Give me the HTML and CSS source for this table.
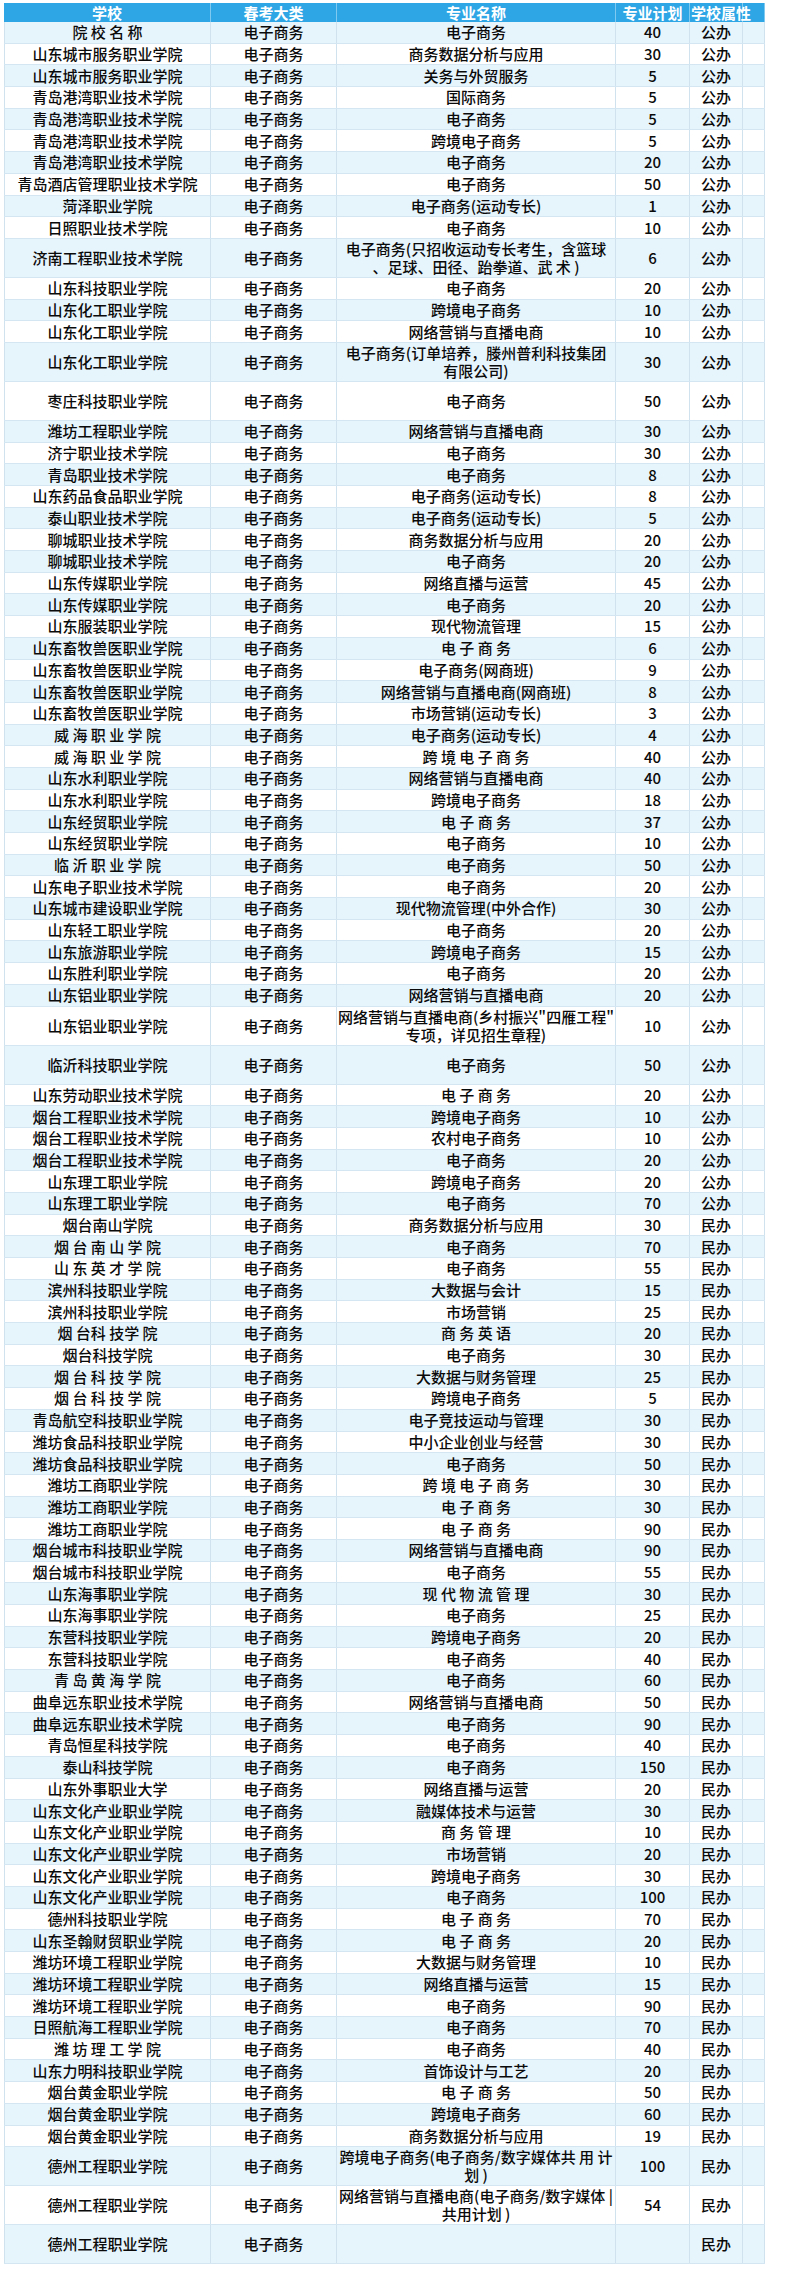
FILE: index.html
```html
<!DOCTYPE html>
<html lang="zh-CN">
<head>
<meta charset="utf-8">
<title>电子商务类 专业计划</title>
<link rel="stylesheet" href="styles.css">
</head>
<body>
<div class="sheet">
  <div class="row head"><div>学校</div><div>春考大类</div><div>专业名称</div><div>专业计划</div><div class="attr">学校属性</div><div></div></div>
  <div class="row"><div>院 校 名 称</div><div>电子商务</div><div>电子商务</div><div>40</div><div>公办</div><div></div></div>
  <div class="row"><div>山东城市服务职业学院</div><div>电子商务</div><div>商务数据分析与应用</div><div>30</div><div>公办</div><div></div></div>
  <div class="row"><div>山东城市服务职业学院</div><div>电子商务</div><div>关务与外贸服务</div><div>5</div><div>公办</div><div></div></div>
  <div class="row"><div>青岛港湾职业技术学院</div><div>电子商务</div><div>国际商务</div><div>5</div><div>公办</div><div></div></div>
  <div class="row"><div>青岛港湾职业技术学院</div><div>电子商务</div><div>电子商务</div><div>5</div><div>公办</div><div></div></div>
  <div class="row"><div>青岛港湾职业技术学院</div><div>电子商务</div><div>跨境电子商务</div><div>5</div><div>公办</div><div></div></div>
  <div class="row"><div>青岛港湾职业技术学院</div><div>电子商务</div><div>电子商务</div><div>20</div><div>公办</div><div></div></div>
  <div class="row"><div>青岛酒店管理职业技术学院</div><div>电子商务</div><div>电子商务</div><div>50</div><div>公办</div><div></div></div>
  <div class="row"><div>菏泽职业学院</div><div>电子商务</div><div>电子商务(运动专长)</div><div>1</div><div>公办</div><div></div></div>
  <div class="row"><div>日照职业技术学院</div><div>电子商务</div><div>电子商务</div><div>10</div><div>公办</div><div></div></div>
  <div class="row tall"><div>济南工程职业技术学院</div><div>电子商务</div><div>电子商务(只招收运动专长考生，含篮球<br>、足球、田径、跆拳道、武 术 )</div><div>6</div><div>公办</div><div></div></div>
  <div class="row"><div>山东科技职业学院</div><div>电子商务</div><div>电子商务</div><div>20</div><div>公办</div><div></div></div>
  <div class="row"><div>山东化工职业学院</div><div>电子商务</div><div>跨境电子商务</div><div>10</div><div>公办</div><div></div></div>
  <div class="row"><div>山东化工职业学院</div><div>电子商务</div><div>网络营销与直播电商</div><div>10</div><div>公办</div><div></div></div>
  <div class="row tall"><div>山东化工职业学院</div><div>电子商务</div><div>电子商务(订单培养，滕州普利科技集团<br>有限公司)</div><div>30</div><div>公办</div><div></div></div>
  <div class="row tall"><div>枣庄科技职业学院</div><div>电子商务</div><div>电子商务</div><div>50</div><div>公办</div><div></div></div>
  <div class="row"><div>潍坊工程职业学院</div><div>电子商务</div><div>网络营销与直播电商</div><div>30</div><div>公办</div><div></div></div>
  <div class="row"><div>济宁职业技术学院</div><div>电子商务</div><div>电子商务</div><div>30</div><div>公办</div><div></div></div>
  <div class="row"><div>青岛职业技术学院</div><div>电子商务</div><div>电子商务</div><div>8</div><div>公办</div><div></div></div>
  <div class="row"><div>山东药品食品职业学院</div><div>电子商务</div><div>电子商务(运动专长)</div><div>8</div><div>公办</div><div></div></div>
  <div class="row"><div>泰山职业技术学院</div><div>电子商务</div><div>电子商务(运动专长)</div><div>5</div><div>公办</div><div></div></div>
  <div class="row"><div>聊城职业技术学院</div><div>电子商务</div><div>商务数据分析与应用</div><div>20</div><div>公办</div><div></div></div>
  <div class="row"><div>聊城职业技术学院</div><div>电子商务</div><div>电子商务</div><div>20</div><div>公办</div><div></div></div>
  <div class="row"><div>山东传媒职业学院</div><div>电子商务</div><div>网络直播与运营</div><div>45</div><div>公办</div><div></div></div>
  <div class="row"><div>山东传媒职业学院</div><div>电子商务</div><div>电子商务</div><div>20</div><div>公办</div><div></div></div>
  <div class="row"><div>山东服装职业学院</div><div>电子商务</div><div>现代物流管理</div><div>15</div><div>公办</div><div></div></div>
  <div class="row"><div>山东畜牧兽医职业学院</div><div>电子商务</div><div>电 子 商 务</div><div>6</div><div>公办</div><div></div></div>
  <div class="row"><div>山东畜牧兽医职业学院</div><div>电子商务</div><div>电子商务(网商班)</div><div>9</div><div>公办</div><div></div></div>
  <div class="row"><div>山东畜牧兽医职业学院</div><div>电子商务</div><div>网络营销与直播电商(网商班)</div><div>8</div><div>公办</div><div></div></div>
  <div class="row"><div>山东畜牧兽医职业学院</div><div>电子商务</div><div>市场营销(运动专长)</div><div>3</div><div>公办</div><div></div></div>
  <div class="row"><div>威 海 职 业 学 院</div><div>电子商务</div><div>电子商务(运动专长)</div><div>4</div><div>公办</div><div></div></div>
  <div class="row"><div>威 海 职 业 学 院</div><div>电子商务</div><div>跨 境 电 子 商 务</div><div>40</div><div>公办</div><div></div></div>
  <div class="row"><div>山东水利职业学院</div><div>电子商务</div><div>网络营销与直播电商</div><div>40</div><div>公办</div><div></div></div>
  <div class="row"><div>山东水利职业学院</div><div>电子商务</div><div>跨境电子商务</div><div>18</div><div>公办</div><div></div></div>
  <div class="row"><div>山东经贸职业学院</div><div>电子商务</div><div>电 子 商 务</div><div>37</div><div>公办</div><div></div></div>
  <div class="row"><div>山东经贸职业学院</div><div>电子商务</div><div>电子商务</div><div>10</div><div>公办</div><div></div></div>
  <div class="row"><div>临 沂 职 业 学 院</div><div>电子商务</div><div>电子商务</div><div>50</div><div>公办</div><div></div></div>
  <div class="row"><div>山东电子职业技术学院</div><div>电子商务</div><div>电子商务</div><div>20</div><div>公办</div><div></div></div>
  <div class="row"><div>山东城市建设职业学院</div><div>电子商务</div><div>现代物流管理(中外合作)</div><div>30</div><div>公办</div><div></div></div>
  <div class="row"><div>山东轻工职业学院</div><div>电子商务</div><div>电子商务</div><div>20</div><div>公办</div><div></div></div>
  <div class="row"><div>山东旅游职业学院</div><div>电子商务</div><div>跨境电子商务</div><div>15</div><div>公办</div><div></div></div>
  <div class="row"><div>山东胜利职业学院</div><div>电子商务</div><div>电子商务</div><div>20</div><div>公办</div><div></div></div>
  <div class="row"><div>山东铝业职业学院</div><div>电子商务</div><div>网络营销与直播电商</div><div>20</div><div>公办</div><div></div></div>
  <div class="row tall"><div>山东铝业职业学院</div><div>电子商务</div><div>网络营销与直播电商(乡村振兴"四雁工程"<br>专项，详见招生章程)</div><div>10</div><div>公办</div><div></div></div>
  <div class="row tall"><div>临沂科技职业学院</div><div>电子商务</div><div>电子商务</div><div>50</div><div>公办</div><div></div></div>
  <div class="row"><div>山东劳动职业技术学院</div><div>电子商务</div><div>电 子 商 务</div><div>20</div><div>公办</div><div></div></div>
  <div class="row"><div>烟台工程职业技术学院</div><div>电子商务</div><div>跨境电子商务</div><div>10</div><div>公办</div><div></div></div>
  <div class="row"><div>烟台工程职业技术学院</div><div>电子商务</div><div>农村电子商务</div><div>10</div><div>公办</div><div></div></div>
  <div class="row"><div>烟台工程职业技术学院</div><div>电子商务</div><div>电子商务</div><div>20</div><div>公办</div><div></div></div>
  <div class="row"><div>山东理工职业学院</div><div>电子商务</div><div>跨境电子商务</div><div>20</div><div>公办</div><div></div></div>
  <div class="row"><div>山东理工职业学院</div><div>电子商务</div><div>电子商务</div><div>70</div><div>公办</div><div></div></div>
  <div class="row"><div>烟台南山学院</div><div>电子商务</div><div>商务数据分析与应用</div><div>30</div><div>民办</div><div></div></div>
  <div class="row"><div>烟 台 南 山 学 院</div><div>电子商务</div><div>电子商务</div><div>70</div><div>民办</div><div></div></div>
  <div class="row"><div>山 东 英 才 学 院</div><div>电子商务</div><div>电子商务</div><div>55</div><div>民办</div><div></div></div>
  <div class="row"><div>滨州科技职业学院</div><div>电子商务</div><div>大数据与会计</div><div>15</div><div>民办</div><div></div></div>
  <div class="row"><div>滨州科技职业学院</div><div>电子商务</div><div>市场营销</div><div>25</div><div>民办</div><div></div></div>
  <div class="row"><div>烟 台科 技学 院</div><div>电子商务</div><div>商 务 英 语</div><div>20</div><div>民办</div><div></div></div>
  <div class="row"><div>烟台科技学院</div><div>电子商务</div><div>电子商务</div><div>30</div><div>民办</div><div></div></div>
  <div class="row"><div>烟 台 科 技 学 院</div><div>电子商务</div><div>大数据与财务管理</div><div>25</div><div>民办</div><div></div></div>
  <div class="row"><div>烟 台 科 技 学 院</div><div>电子商务</div><div>跨境电子商务</div><div>5</div><div>民办</div><div></div></div>
  <div class="row"><div>青岛航空科技职业学院</div><div>电子商务</div><div>电子竞技运动与管理</div><div>30</div><div>民办</div><div></div></div>
  <div class="row"><div>潍坊食品科技职业学院</div><div>电子商务</div><div>中小企业创业与经营</div><div>30</div><div>民办</div><div></div></div>
  <div class="row"><div>潍坊食品科技职业学院</div><div>电子商务</div><div>电子商务</div><div>50</div><div>民办</div><div></div></div>
  <div class="row"><div>潍坊工商职业学院</div><div>电子商务</div><div>跨 境 电 子 商 务</div><div>30</div><div>民办</div><div></div></div>
  <div class="row"><div>潍坊工商职业学院</div><div>电子商务</div><div>电 子 商 务</div><div>30</div><div>民办</div><div></div></div>
  <div class="row"><div>潍坊工商职业学院</div><div>电子商务</div><div>电 子 商 务</div><div>90</div><div>民办</div><div></div></div>
  <div class="row"><div>烟台城市科技职业学院</div><div>电子商务</div><div>网络营销与直播电商</div><div>90</div><div>民办</div><div></div></div>
  <div class="row"><div>烟台城市科技职业学院</div><div>电子商务</div><div>电子商务</div><div>55</div><div>民办</div><div></div></div>
  <div class="row"><div>山东海事职业学院</div><div>电子商务</div><div>现 代 物 流 管 理</div><div>30</div><div>民办</div><div></div></div>
  <div class="row"><div>山东海事职业学院</div><div>电子商务</div><div>电子商务</div><div>25</div><div>民办</div><div></div></div>
  <div class="row"><div>东营科技职业学院</div><div>电子商务</div><div>跨境电子商务</div><div>20</div><div>民办</div><div></div></div>
  <div class="row"><div>东营科技职业学院</div><div>电子商务</div><div>电子商务</div><div>40</div><div>民办</div><div></div></div>
  <div class="row"><div>青 岛 黄 海 学 院</div><div>电子商务</div><div>电子商务</div><div>60</div><div>民办</div><div></div></div>
  <div class="row"><div>曲阜远东职业技术学院</div><div>电子商务</div><div>网络营销与直播电商</div><div>50</div><div>民办</div><div></div></div>
  <div class="row"><div>曲阜远东职业技术学院</div><div>电子商务</div><div>电子商务</div><div>90</div><div>民办</div><div></div></div>
  <div class="row"><div>青岛恒星科技学院</div><div>电子商务</div><div>电子商务</div><div>40</div><div>民办</div><div></div></div>
  <div class="row"><div>泰山科技学院</div><div>电子商务</div><div>电子商务</div><div>150</div><div>民办</div><div></div></div>
  <div class="row"><div>山东外事职业大学</div><div>电子商务</div><div>网络直播与运营</div><div>20</div><div>民办</div><div></div></div>
  <div class="row"><div>山东文化产业职业学院</div><div>电子商务</div><div>融媒体技术与运营</div><div>30</div><div>民办</div><div></div></div>
  <div class="row"><div>山东文化产业职业学院</div><div>电子商务</div><div>商 务 管 理</div><div>10</div><div>民办</div><div></div></div>
  <div class="row"><div>山东文化产业职业学院</div><div>电子商务</div><div>市场营销</div><div>20</div><div>民办</div><div></div></div>
  <div class="row"><div>山东文化产业职业学院</div><div>电子商务</div><div>跨境电子商务</div><div>30</div><div>民办</div><div></div></div>
  <div class="row"><div>山东文化产业职业学院</div><div>电子商务</div><div>电子商务</div><div>100</div><div>民办</div><div></div></div>
  <div class="row"><div>德州科技职业学院</div><div>电子商务</div><div>电 子 商 务</div><div>70</div><div>民办</div><div></div></div>
  <div class="row"><div>山东圣翰财贸职业学院</div><div>电子商务</div><div>电 子 商 务</div><div>20</div><div>民办</div><div></div></div>
  <div class="row"><div>潍坊环境工程职业学院</div><div>电子商务</div><div>大数据与财务管理</div><div>10</div><div>民办</div><div></div></div>
  <div class="row"><div>潍坊环境工程职业学院</div><div>电子商务</div><div>网络直播与运营</div><div>15</div><div>民办</div><div></div></div>
  <div class="row"><div>潍坊环境工程职业学院</div><div>电子商务</div><div>电子商务</div><div>90</div><div>民办</div><div></div></div>
  <div class="row"><div>日照航海工程职业学院</div><div>电子商务</div><div>电子商务</div><div>70</div><div>民办</div><div></div></div>
  <div class="row"><div>潍 坊 理 工 学 院</div><div>电子商务</div><div>电子商务</div><div>40</div><div>民办</div><div></div></div>
  <div class="row"><div>山东力明科技职业学院</div><div>电子商务</div><div>首饰设计与工艺</div><div>20</div><div>民办</div><div></div></div>
  <div class="row"><div>烟台黄金职业学院</div><div>电子商务</div><div>电 子 商 务</div><div>50</div><div>民办</div><div></div></div>
  <div class="row"><div>烟台黄金职业学院</div><div>电子商务</div><div>跨境电子商务</div><div>60</div><div>民办</div><div></div></div>
  <div class="row"><div>烟台黄金职业学院</div><div>电子商务</div><div>商务数据分析与应用</div><div>19</div><div>民办</div><div></div></div>
  <div class="row tall"><div>德州工程职业学院</div><div>电子商务</div><div>跨境电子商务(电子商务/数字媒体共 用 计<br>划 )</div><div>100</div><div>民办</div><div></div></div>
  <div class="row tall"><div>德州工程职业学院</div><div>电子商务</div><div>网络营销与直播电商(电子商务/数字媒体 |<br>共用计划 )</div><div>54</div><div>民办</div><div></div></div>
  <div class="row tall"><div>德州工程职业学院</div><div>电子商务</div><div></div><div></div><div>民办</div><div></div></div>
</div>
</body>
</html>
```
FILE: styles.css
```css
html, body {
  margin: 0;
  padding: 0;
  background: #ffffff;
}

body {
  font-family: "Noto Sans CJK SC", "Noto Sans", sans-serif;
  color: #0a0a0a;
}

.sheet {
  padding: 3px 0 0 4px;
  width: 761px;
}

.row {
  display: grid;
  grid-template-columns: 207px 126px 279px 74px 53px 22px;
  height: 21.7px;
  box-sizing: border-box;
  border-bottom: 1px solid #d3e6f1;
  background: #ffffff;
}

.row:nth-child(even) {
  background: #e6f4fc;
}

.row.tall {
  height: 39px;
}

.row > div {
  display: flex;
  align-items: center;
  justify-content: center;
  text-align: center;
  font-size: 15px;
  font-weight: 500;
  line-height: 18px;
  border-right: 1px solid #cfe2ee;
  white-space: nowrap;
  overflow: hidden;
}

.row > div:first-child {
  border-left: 1px solid #cfe2ee;
}

.row.head {
  height: 19px;
  background: #2ea6e6;
  border-bottom: none;
}

.row.head > div {
  color: #ffffff;
  font-weight: 700;
  font-size: 15px;
  border-right: 1px solid #7fc8ef;
  border-left: none;
  overflow: visible;
}

.row.head > div.attr {
  justify-content: flex-start;
  padding-left: 1px;
}
```
